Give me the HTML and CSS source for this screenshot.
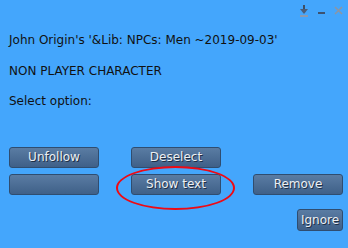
FILE: index.html
```html
<!DOCTYPE html>
<html lang="en">
<head>
    <meta charset="UTF-8">
    <title>NPC dialog</title>
    <link rel="stylesheet" href="styles.css">
</head>
<body>

<div class="dialog">
    <div class="title-bar">
        <svg class="tb-icon" width="10" height="13" viewBox="0 0 10 13">
            <rect x="4" y="1" width="2" height="5" fill="#3d4f66"/>
            <path d="M1 5 L9 5 L5 10 Z" fill="#4a5d78"/>
            <rect x="1" y="11" width="8" height="2" fill="#8c9aae"/>
        </svg>
        <svg class="tb-icon" width="9" height="13" viewBox="0 0 9 13">
            <rect x="1" y="8" width="7" height="2" fill="#3d5270"/>
        </svg>
        <svg class="tb-icon" width="9" height="13" viewBox="0 0 9 13">
            <path d="M1 3 L8 10 M8 3 L1 10" stroke="#8a96a6" stroke-width="1.6"/>
        </svg>
    </div>

    <div class="message">
        <p>John Origin's '&amp;Lib: NPCs: Men ~2019-09-03'</p>
        <p>NON PLAYER CHARACTER</p>
        <p>Select option:</p>
    </div>

    <div class="buttons">
        <div class="btn">Unfollow</div>
        <div class="btn">Deselect</div>
        <div class="slot"></div>
        <div class="btn"></div>
        <div class="btn marked">Show text</div>
        <div class="btn">Remove</div>
    </div>

    <div class="footer">
        <div class="btn small">Ignore</div>
    </div>
</div>

</body>
</html>
```

FILE: styles.css
```css
body, html {
    margin: 0;
    padding: 0;
    background: #44a6fc;
    font-family: "DejaVu Sans", sans-serif;
}

.dialog {
    width: 348px;
    height: 248px;
    overflow: hidden;
}

.title-bar {
    display: flex;
    justify-content: flex-end;
    gap: 8px;
    height: 19px;
    padding: 4px 5px 0 0;
    box-sizing: border-box;
}

.tb-icon {
    display: block;
}

.message {
    padding: 0 0 0 9px;
    font-size: 12px;
    color: #111;
}

.message p {
    margin: 0;
    height: 30px;
    line-height: 14px;
    padding-top: 15px;
    box-sizing: border-box;
}

.message p:first-child {
    padding-top: 14px;
}

.buttons {
    display: grid;
    grid-template-columns: 90px 90px 90px;
    grid-auto-rows: 21px;
    column-gap: 32px;
    row-gap: 6px;
    margin: 38px 0 0 9px;
}

.slot {
    visibility: hidden;
}

.btn {
    position: relative;
    box-sizing: border-box;
    border: 1px solid #2f4d70;
    border-radius: 3px;
    background: linear-gradient(#5a7ca3, #3f6088);
    color: #eceff3;
    font-size: 12px;
    line-height: 19px;
    text-align: center;
    text-shadow: 1px 1px 0 #1e2f45;
}

/* red ring drawn around the button */
.marked::after {
    content: "";
    position: absolute;
    left: -16px;
    top: -9px;
    width: 115px;
    height: 40px;
    border: 2.5px solid #ee0a14;
    border-radius: 50%;
}

.footer {
    display: flex;
    justify-content: flex-end;
    padding: 14px 5px 0 0;
}

.small {
    width: 46px;
    height: 22px;
    line-height: 20px;
}
```
